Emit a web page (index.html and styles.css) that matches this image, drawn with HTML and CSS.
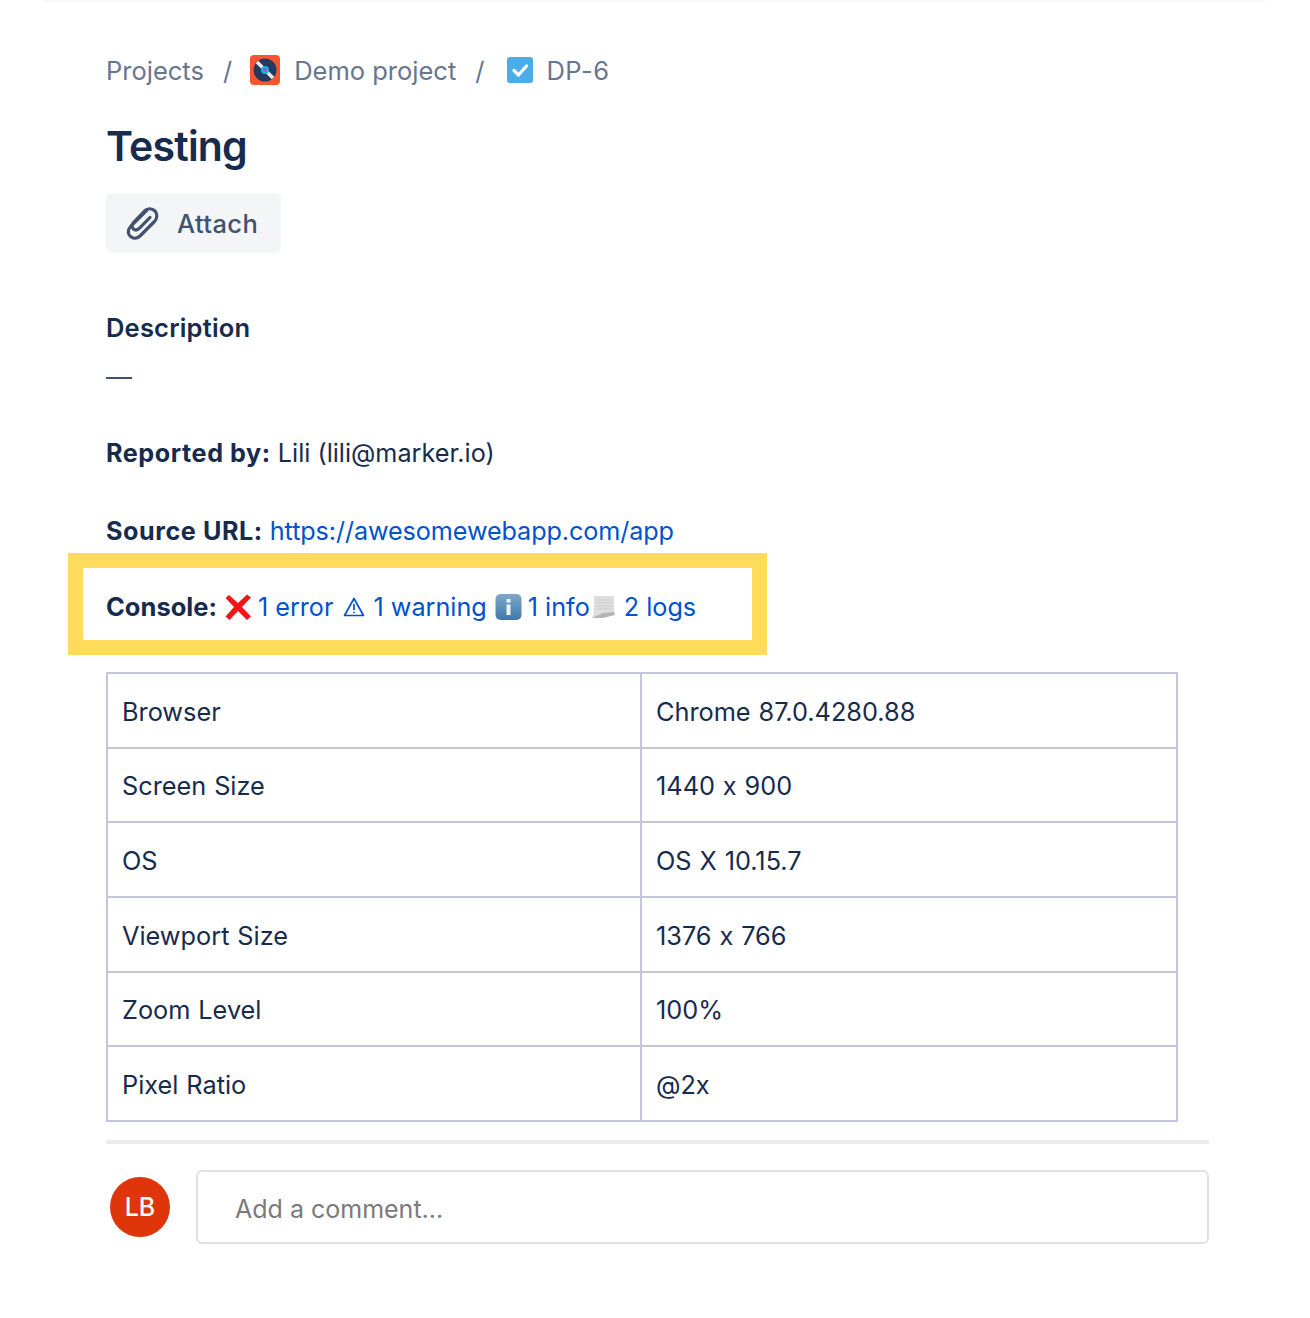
FILE: index.html
```html
<!DOCTYPE html>
<html lang="en">
<head>
<meta charset="utf-8">
<title>DP-6 Testing</title>
<link rel="stylesheet" href="styles.css">
</head>
<body>
<div class="topfade"></div>
<main class="issue">
  <nav class="crumbs">
    <span>Projects</span>
    <span class="sep">/</span>
    <svg class="proj-icon" viewBox="0 0 30 30" aria-hidden="true">
      <rect width="30" height="30" rx="4" fill="#fb5530"/>
      <circle cx="15" cy="15" r="11.5" fill="#243a5e"/>
      <path d="M7 7 L23 23" stroke="#e8eef5" stroke-width="3.4"/>
      <circle cx="15" cy="15" r="4" fill="#18b5d8"/>
      <circle cx="15" cy="15" r="1.8" fill="#b53fd8"/>
    </svg>
    <span>Demo project</span>
    <span class="sep">/</span>
    <svg class="task-icon" viewBox="0 0 26 26" aria-hidden="true">
      <rect width="26" height="26" rx="3" fill="#4bade8"/>
      <path d="M7 13.5 L11.5 18 L19.5 9" fill="none" stroke="#fff" stroke-width="3.2" stroke-linecap="round" stroke-linejoin="round"/>
    </svg>
    <span class="key">DP-6</span>
  </nav>
  <h1 class="title">Testing</h1>
  <button class="attach" type="button">
    <svg class="clip" viewBox="0 0 34 36" aria-hidden="true">
      <path d="M22 5 L6 21 C2 25.500 3 29.500 5.500 31.500 C8.500 34 12.500 33.500 15.500 30.500 L29 17 C32.500 13.500 32.500 9 30 6 C27 3 22.500 3 19.500 6 L8.500 17.500 C6.500 19.800 6.800 22.500 8.500 24 C10.300 25.500 12.500 25.200 14.500 23.200 L25 12.500" fill="none" stroke="#42526e" stroke-width="3.200" stroke-linecap="round" stroke-linejoin="round"/>
    </svg>
    <span>Attach</span>
  </button>
  <h2 class="desc-head">Description</h2>
  <div class="dash"></div>
  <p class="line reporter"><strong>Reported by:</strong> Lili (lili@marker.io)</p>
  <p class="line source"><strong>Source URL:</strong> <a href="#">https://awesomewebapp.com/app</a></p>
  <div class="highlight">
    <p class="console"><strong>Console:</strong>
      <svg class="cross" viewBox="0 0 26 26" aria-hidden="true"><path d="M4 1 L13 9 L22 0.500 L26 3.500 L17 13 L26 22.500 L22 26 L13 17 L4.500 26 L0.500 22.500 L9 13 L0.500 4 Z" fill="#f4141c"/></svg>
      <a href="#">1 error</a>
      <svg class="warn" viewBox="0 0 22 20" aria-hidden="true"><path d="M11 1.500 L20.500 18.500 H1.500 Z" fill="none" stroke="#0052cc" stroke-width="1.700" stroke-linejoin="round"/><path d="M11 7 V13 M11 14.700 V16.200" stroke="#0052cc" stroke-width="1.700"/></svg>
      <a href="#">1 warning</a>
      <svg class="info" viewBox="0 0 26 26" aria-hidden="true">
        <defs><linearGradient id="infog" x1="0" y1="0" x2="0" y2="1"><stop offset="0" stop-color="#7fa8c9"/><stop offset="1" stop-color="#3f78a8"/></linearGradient></defs>
        <rect width="26" height="26" rx="5" fill="url(#infog)"/>
        <rect x="11" y="5" width="4" height="3.500" fill="#eef4f9"/>
        <rect x="11" y="10.500" width="4" height="10.500" fill="#eef4f9"/>
      </svg>
      <a href="#">1 info</a><svg class="scroll" viewBox="0 0 24 24" aria-hidden="true">
        <path d="M3 1 H23 V18 L1 23 C3 19 3 15 3 11 Z" fill="#dedede"/>
        <path d="M5 5 H21 M5 8 H21 M5 11 H21 M5 14 H21" stroke="#cfcfcf" stroke-width="1"/>
        <path d="M1 23 L12 18 L23 17 L24 20 L12 23 Z" fill="#b4b4b4"/>
      </svg>
      <a class="logs" href="#">2 logs</a>
    </p>
  </div>
  <table class="env">
    <tbody>
      <tr><td>Browser</td><td>Chrome 87.0.4280.88</td></tr>
      <tr><td>Screen Size</td><td>1440 x 900</td></tr>
      <tr><td>OS</td><td>OS X 10.15.7</td></tr>
      <tr><td>Viewport Size</td><td>1376 x 766</td></tr>
      <tr><td>Zoom Level</td><td>100%</td></tr>
      <tr><td>Pixel Ratio</td><td>@2x</td></tr>
    </tbody>
  </table>
  <hr class="rule">
  <div class="comment-row">
    <div class="avatar">LB</div>
    <div class="comment-box">Add a comment...</div>
  </div>
</main>
</body>
</html>
```
FILE: styles.css
```css
* { box-sizing: border-box; }
html, body { margin: 0; padding: 0; background: #fff; }
body {
  height: 1318px;
  overflow: hidden;
  font-family: Inter, "Liberation Sans", sans-serif;
  font-feature-settings: "calt" 0;
  color: #172b4d;
}
.topfade {
  height: 4px;
  margin: 0 45px;
  background: linear-gradient(#f7f7f7, #fff);
}
.issue {
  width: 1103px;
  margin-left: 106px;
}
.crumbs {
  display: flex;
  align-items: center;
  height: 34px;
  margin-top: 49px;
  font-size: 25.500px;
  color: #67758f;
}
.sep { margin: 0 18px 0 19px; }
.proj-icon { width: 30px; height: 30px; margin-right: 14px; }
.task-icon { width: 26px; height: 26px; margin: 0 13px 0 5px; }
.key { letter-spacing: 0.500px; }
.title {
  margin: 31px 0 0;
  font-size: 41px;
  line-height: 56px;
  font-weight: 600;
  letter-spacing: -0.800px;
  color: #172b4d;
}
.attach {
  display: flex;
  align-items: center;
  width: 175px;
  height: 60px;
  margin-top: 19px;
  padding: 0 0 0 19px;
  border: 0;
  border-radius: 6px;
  background: #f4f5f7;
  color: #42526e;
  font: 500 25.500px Inter, "Liberation Sans", sans-serif;
  letter-spacing: 0.400px;
}
.clip { width: 34px; height: 36px; margin-right: 18px; }
.desc-head {
  margin: 58px 0 0;
  font-size: 25.500px;
  line-height: 34px;
  font-weight: 600;
  letter-spacing: 0.200px;
}
.dash {
  width: 26px;
  height: 2px;
  margin-top: 32px;
  background: #42526e;
}
.line {
  margin: 0;
  font-size: 25.200px;
  line-height: 36px;
}
.line strong { font-weight: 700; letter-spacing: 0.550px; }
.console strong { font-weight: 700; font-size: 25.500px; }
.reporter { margin-top: 56px; }
.source { margin-top: 42px; }
.source a { letter-spacing: -0.100px; }
a { color: #0052cc; text-decoration: none; }
.highlight {
  width: 699px;
  height: 102px;
  margin: 4px 0 0 -38px;
  padding-left: 23px;
  border: 15px solid #ffdb5c;
  display: flex;
  align-items: center;
}
.console {
  display: flex;
  align-items: center;
  margin: 6px 0 0;
  font-size: 25.200px;
  line-height: 36px;
  white-space: pre;
}
.cross { width: 26px; height: 26px; margin: 0 7px 0 8px; }
.warn { width: 22px; height: 20px; margin: 0 8px 0 10px; }
.info { width: 27px; height: 26px; margin: 0 6px 0 8px; }
.scroll { width: 24px; height: 24px; margin-left: 1px; }
.logs { margin-left: 9px; }
.env {
  width: 1072px;
  height: 450px;
  margin-top: 17px;
  border-collapse: collapse;
  table-layout: fixed;
  font-size: 25.300px;
  word-spacing: 0.800px;
}
.env td {
  height: 74.600px;
  padding: 2px 15px 0 14px;
  border: 2px solid #c1c7d9;
}
.env td:first-child { width: 534px; }
.rule {
  height: 4px;
  margin: 18px 0 0;
  border: 0;
  background: #ebecf0;
}
.comment-row {
  display: flex;
  align-items: center;
  margin-top: 26px;
}
.avatar {
  display: flex;
  align-items: center;
  justify-content: center;
  width: 60px;
  height: 60px;
  margin: 0 26px 0 4px;
  border-radius: 50%;
  background: #de350b;
  color: #fff;
  font-size: 25px;
  font-weight: 500;
}
.comment-box {
  flex: 1;
  display: flex;
  align-items: center;
  height: 74px;
  padding: 3px 0 0 37px;
  border: 2px solid #dfe1e6;
  border-radius: 6px;
  color: #7a7a7a;
  font-size: 25px;
}
```
